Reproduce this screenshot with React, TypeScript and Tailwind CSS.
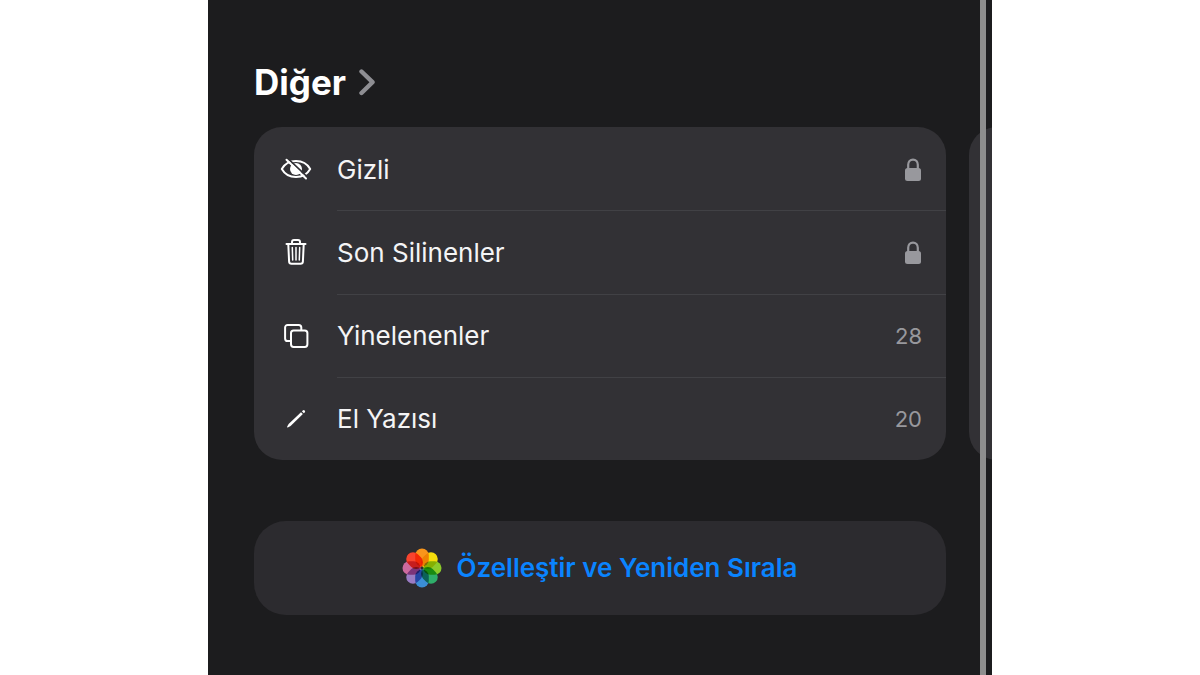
import type { ReactNode } from 'react';

const PETALS = ['#f9951b', '#f5dc0c', '#8ccb2a', '#2fae6a', '#3b8ed6', '#9a7cc4', '#cc6a9e', '#f9442e'];

function ChevronIcon() {
  return (
    <svg width="18" height="28" viewBox="0 0 18 28" fill="none" stroke="#8e8e93" strokeWidth="4.400" strokeLinecap="round" strokeLinejoin="round" aria-hidden="true">
      <path d="M3.500 3.500 14.500 14.200 3.500 25" />
    </svg>
  );
}

function HiddenIcon() {
  return (
    <svg width="32" height="24" viewBox="0 0 32 24" fill="none" aria-hidden="true">
      <path d="M1.800 12C4.600 7 9.800 4 16 4S27.400 7 30.200 12C27.400 17 22.200 20 16 20S4.600 17 1.800 12Z" stroke="#fff" strokeWidth="2" strokeLinejoin="round" />
      <circle cx="16" cy="12" r="6" fill="#fff" />
      <path d="M8.200 1.800 28 20.600" stroke="#323135" strokeWidth="1.800" />
      <path d="M6.500 2.800 26 21.500" stroke="#fff" strokeWidth="2" strokeLinecap="round" />
    </svg>
  );
}

function TrashIcon() {
  return (
    <svg width="24" height="28" viewBox="0 0 24 28" fill="none" stroke="#fff" strokeWidth="2" strokeLinecap="round" strokeLinejoin="round" aria-hidden="true">
      <path d="M2.500 6h19" />
      <path d="M8 6V4a2 2 0 0 1 2-2h4a2 2 0 0 1 2 2v2" />
      <path d="m4.300 6.500.8 17a2.400 2.400 0 0 0 2.400 2.300h9a2.400 2.400 0 0 0 2.400-2.300l.8-17" />
      <path d="m8.300 9.500.4 12.500M12 9.500V22M15.700 9.500 15.300 22" strokeWidth="1.500" />
    </svg>
  );
}

function DuplicateIcon() {
  return (
    <svg width="26" height="26" viewBox="0 0 26 26" fill="none" stroke="#fff" strokeWidth="2" strokeLinejoin="round" aria-hidden="true">
      <path d="M7.500 18H4.700A2.600 2.600 0 0 1 2.100 15.400V4.500A2.600 2.600 0 0 1 4.700 1.900h11A2.600 2.600 0 0 1 18.300 4.500V7" />
      <rect x="8" y="7.500" width="16.400" height="16.400" rx="2.600" />
    </svg>
  );
}

function PencilIcon() {
  return (
    <svg width="22" height="22" viewBox="0 0 22 22" fill="#fff" aria-hidden="true">
      <path d="M16 4.200 17.900 6.100 5.600 18 2.800 19.500c-.5.200-.9-.2-.7-.7l1.500-2.700Z" />
      <path d="m16.900 3.300.9-.8a1.300 1.300 0 0 1 1.900 1.900l-.9.900Z" />
    </svg>
  );
}

function LockIcon() {
  return (
    <svg width="18" height="24" viewBox="0 0 18 24" fill="none" role="img" aria-label="Kilitli">
      <path d="M4.200 11V6.800C4.200 3.700 6.200 1.600 9 1.600s4.800 2.100 4.800 5.200V11" stroke="#98989d" strokeWidth="2.200" />
      <rect x="1" y="10" width="16" height="13" rx="2.500" fill="#98989d" />
    </svg>
  );
}

function PhotosIcon() {
  return (
    <svg className="isolate" width="40" height="40" viewBox="-20 -20 40 40" aria-hidden="true">
      {PETALS.map((color, i) => (
        <rect
          key={color}
          className="mix-blend-multiply"
          x="-6.800"
          y="-19.500"
          width="13.600"
          height="18"
          rx="6.800"
          fill={color}
          transform={`rotate(${i * 45})`}
        />
      ))}
    </svg>
  );
}

type Item = { label: string; icon: ReactNode; count?: number };

const items: Item[] = [
  { label: 'Gizli', icon: <HiddenIcon /> },
  { label: 'Son Silinenler', icon: <TrashIcon /> },
  { label: 'Yinelenenler', icon: <DuplicateIcon />, count: 28 },
  { label: 'El Yazısı', icon: <PencilIcon />, count: 20 },
];

function ItemRow({ item, first }: { item: Item; first: boolean }) {
  return (
    <li className="flex">
      <button type="button" className="flex flex-1 items-stretch text-left">
        <span className="flex w-[83px] shrink-0 items-center justify-center pt-px">{item.icon}</span>
        <span className={`flex flex-1 items-center justify-between border-t pt-px pr-6 ${first ? 'border-transparent' : 'border-[#414145]'}`}>
          <span className="text-[26px] leading-8 text-[#f4f4f5]">{item.label}</span>
          {item.count === undefined ? <LockIcon /> : <span className="text-[22px] leading-8 text-[#98989d]">{item.count}</span>}
        </span>
      </button>
    </li>
  );
}

export default function App() {
  return (
    <div className="flex min-h-screen justify-center bg-white font-['Inter',sans-serif]">
      <main className="relative w-full max-w-[784px] overflow-hidden bg-[#1c1c1e] pt-15">
        <h1 className="px-[46px]">
          <button type="button" className="flex items-center gap-3 text-[35px] leading-11 font-bold text-white">
            Diğer
            <ChevronIcon />
          </button>
        </h1>

        <div className="mt-[23px] flex gap-[23px] overflow-hidden pl-[46px]">
          <ul className="grid min-h-[333px] w-[calc(100%-46px)] shrink-0 grid-rows-4 rounded-[28px] bg-[#323135]">
            {items.map((item, i) => (
              <ItemRow key={item.label} item={item} first={i === 0} />
            ))}
          </ul>
          <div className="w-full shrink-0 rounded-[28px] bg-[#323135]" />
        </div>

        <div className="mt-[61px] px-[46px]">
          <button type="button" className="flex w-full items-center justify-center gap-[14px] rounded-[32px] bg-[#2c2b2f] py-[27px] text-[26px] leading-10 font-semibold text-[#0a84ff]">
            <PhotosIcon />
            Özelleştir ve Yeniden Sırala
          </button>
        </div>

        <div className="absolute inset-y-0 right-[6px] w-[6px] bg-[#8e8e8e]" />
      </main>
    </div>
  );
}
